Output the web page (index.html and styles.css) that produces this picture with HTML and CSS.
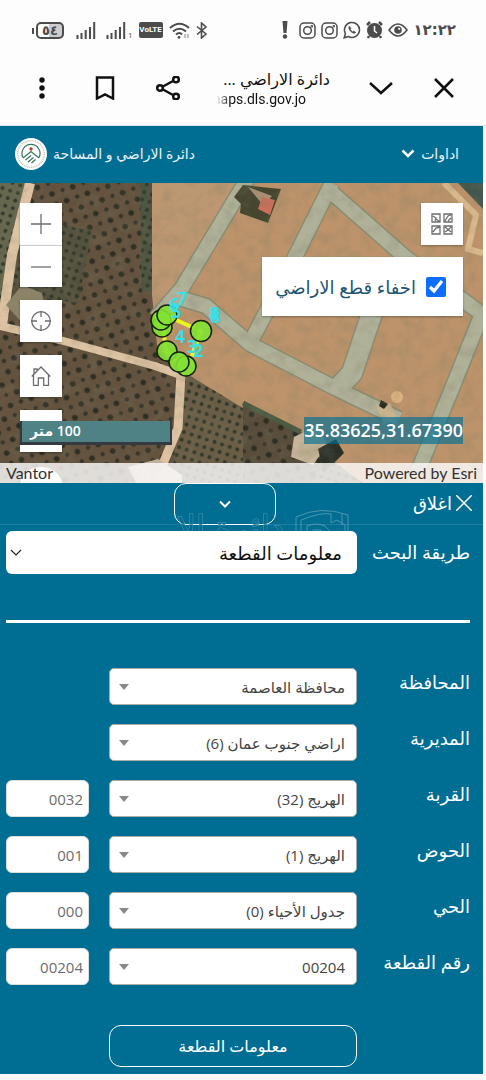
FILE: index.html
```html
<!DOCTYPE html>
<html lang="ar" dir="rtl">
<head>
    <meta charset="UTF-8">
    <meta name="viewport" content="width=device-width, initial-scale=1.0">
    <title>دائرة الاراضي و المساحة</title>
    <link rel="stylesheet" href="styles.css">
</head>
<body>
    <div class="status" dir="ltr">
        <div class="status-group">
            <span class="battery">٥٤</span>
            <svg class="signal" width="20" height="17" viewBox="0 0 20 17"><path d="M1.5 17v-4M5.5 17v-6M9.7 17V8M14 17V5M18.2 17V0"/></svg>
            <span class="sim"><svg class="signal" width="20" height="17" viewBox="0 0 20 17"><path d="M1.5 17v-4M5.5 17v-6M9.7 17V8M14 17V5M18.2 17V0"/></svg><small>1</small></span>
            <span class="volte">VoLTE</span>
            <svg width="21" height="17" viewBox="0 0 21 17" fill="none" stroke="#4c4c4c" stroke-width="2"><path d="M1 6q9.500-8.500 19 0M4 9.500q6.500-5.500 13 0M7 12.500q3.500-3 6 0"/><circle cx="10" cy="15.300" r="1" fill="#4c4c4c" stroke-width="1"/><path d="M16 12v4M19 12v4" stroke="#aaa" stroke-width="1.500"/></svg>
            <svg width="12" height="17" viewBox="0 0 12 17" fill="none" stroke="#4c4c4c" stroke-width="1.600"><path d="M1 4.500l9 7.500-4.500 4V1L10 5l-9 7.500"/></svg>
        </div>
        <div class="status-group status-right">
            <svg class="alert" width="6" height="18" viewBox="0 0 6 18" fill="#4c4c4c"><path d="M.5 0h5l-1 12h-3z"/><circle cx="3" cy="15.500" r="2.200"/></svg>
            <svg width="17" height="17" viewBox="0 0 17 17" fill="none" stroke="#4c4c4c" stroke-width="1.500"><rect x="1" y="1" width="15" height="15" rx="4"/><circle cx="8.500" cy="8.500" r="3.800"/><circle cx="12.800" cy="4.200" r=".5"/></svg>
            <svg width="17" height="17" viewBox="0 0 17 17" fill="none" stroke="#4c4c4c" stroke-width="1.500"><rect x="1" y="1" width="15" height="15" rx="4"/><circle cx="8.500" cy="8.500" r="3.800"/><circle cx="12.800" cy="4.200" r=".5"/></svg>
            <svg width="18" height="18" viewBox="0 0 18 18" fill="none" stroke="#4c4c4c" stroke-width="1.500"><path d="M1.200 16.800l1.200-4.300a7.500 7.500 0 1 1 3 3z"/><path d="M6.400 5.200c-1.500 1.500.2 4.400 2 5.800 1.600 1.300 3.200 1.800 4.300.4l-1.900-1.300-1.200.8-2.300-2.400.6-1.200z" fill="#4c4c4c" stroke-width=".6"/></svg>
            <svg width="17" height="18" viewBox="0 0 17 18"><path d="M1 4l3-3M16 4l-3-3M3 15l-1 2M14 15l1 2" stroke="#4c4c4c" stroke-width="2.500"/><circle cx="8.500" cy="9.500" r="7.500" fill="#4c4c4c"/><path d="M8.500 5v5l2.500 2" fill="none" stroke="#fff" stroke-width="1.500"/></svg>
            <svg width="20" height="14" viewBox="0 0 20 14"><path d="M1 7q9-12 18 0-9 12-18 0z" fill="none" stroke="#4c4c4c" stroke-width="1.600"/><circle cx="10" cy="7" r="3.800" fill="#4c4c4c"/><circle cx="11.200" cy="5.800" r="1.100" fill="#fff"/></svg>
            <time class="clock">١٢:٢٢</time>
        </div>
    </div>

    <div class="browser">
        <button class="icon-btn" aria-label="close"><svg viewBox="0 0 24 24"><path d="M3 3l18 18M21 3L3 21"/></svg></button>
        <button class="icon-btn" aria-label="collapse"><svg viewBox="0 0 24 24"><path d="M1 7l11 10L23 7"/></svg></button>
        <div class="page-title">
            <p class="page-name">دائرة الاراضي ...</p>
            <p class="page-url" dir="ltr"><span>maps.dls.gov.jo</span></p>
        </div>
        <button class="icon-btn" aria-label="share"><svg viewBox="0 0 24 24"><path d="M7 10.500l10-5.500M7 13.500l10 5.500"/><circle cx="4" cy="12" r="2.800"/><circle cx="20" cy="3.500" r="2.800"/><circle cx="20" cy="20.500" r="2.800"/></svg></button>
        <button class="icon-btn" aria-label="bookmark"><svg viewBox="0 0 24 24"><path d="M4 1.500h16v21l-8-4-8 4z"/></svg></button>
        <button class="icon-btn" aria-label="menu"><svg viewBox="0 0 24 24"><g class="solid"><circle cx="12" cy="4" r="2.700"/><circle cx="12" cy="12" r="2.700"/><circle cx="12" cy="20" r="2.700"/></g></svg></button>
    </div>

    <div class="app">
        <header class="navbar">
            <button class="tools">اداوات
                <svg width="14" height="9" viewBox="0 0 14 9"><path d="M1.500 1.500L7 7l5.500-5.500" fill="none" stroke="#fff" stroke-width="2.500"/></svg>
            </button>
            <div class="brand">
                <h1>دائرة الاراضي و المساحة</h1>
                <svg width="32" height="32" viewBox="0 0 32 32" fill="none">
                    <circle cx="16" cy="16" r="16" fill="#fff"/>
                    <circle cx="16" cy="16" r="13.300" stroke="#c5c5be" stroke-width="1.600" stroke-dasharray="1 .8"/>
                    <path d="M8 19.500A9 9 0 1 1 24 19.500" stroke="#3f7560" stroke-width="1.200"/>
                    <path d="M8 20l8-6.500 8 6.500M10.500 22l5.500-4.500M13 24l5.500-4.500M16.500 25l4-3.500" stroke="#3f7560" stroke-width="1.300"/>
                    <circle cx="16" cy="11" r="1.700" fill="#c23a36"/>
                </svg>
            </div>
        </header>

        <section class="map" dir="ltr">
            <svg class="imagery" viewBox="0 0 483 300" preserveAspectRatio="xMidYMid slice">
                <defs>
                    <pattern id="trees" width="16" height="15" patternUnits="userSpaceOnUse" patternTransform="rotate(24)">
                        <circle cx="4" cy="4" r="2.800" fill="#2d2d21"/>
                        <circle cx="12" cy="11" r="2.200" fill="#37342a"/>
                    </pattern>
                    <pattern id="grove" width="8" height="8" patternUnits="userSpaceOnUse" patternTransform="rotate(18)">
                        <circle cx="4" cy="4" r="2" fill="#30372a"/>
                    </pattern>
                    <filter id="grain" x="0" y="0" width="100%" height="100%">
                        <feTurbulence type="fractalNoise" baseFrequency=".08" numOctaves="4" seed="8"/>
                        <feColorMatrix values="0 0 0 0 .2  0 0 0 0 .2  0 0 0 0 .12  1.600 0 0 0 -.65"/>
                    </filter>
                </defs>
                <rect width="483" height="300" fill="#bc936b"/>
                <path d="M152 0h92L168 138l-16-20z" fill="#bd9772"/>
                <!-- orchards -->
                <path d="M0 0h152v112l5 50 22 30-5 108H0z" fill="#63523e"/>
                <path d="M0 0h152v112l5 50 22 30-5 108H0z" fill="url(#trees)"/>
                <path d="M0 0h30L12 100 0 140z" fill="#66664e"/>
                <path d="M0 0h30L12 100 0 140z" fill="url(#grove)"/>
                <path d="M62 42l30 6-14 72-66-10 8-50z" fill="#54523e"/>
                <path d="M62 42l30 6-14 72-66-10 8-50z" fill="url(#grove)"/>
                <path d="M140 0h12v108h-10z" fill="#4d5440"/>
                <path d="M140 0h12v108h-10z" fill="url(#grove)"/>
                <path d="M182 188l61 37 66 36 54 39H172z" fill="#6a5d46"/>
                <path d="M182 188l61 37 66 36 54 39H172z" fill="url(#grove)"/>
                <path d="M243 222l60 28 20 30-10 20h-70z" fill="#584c3b"/>
                <path d="M243 222l60 28 20 30-10 20h-70z" fill="url(#trees)"/>
                <path d="M243 220l58 29" stroke="#4c5a42" stroke-width="5"/>
                <!-- dirt tracks -->
                <g fill="none" stroke="#ddc3a3" stroke-linejoin="round">
                    <path d="M30 0L12 72 2 142" stroke-width="10"/>
                    <path d="M0 143l60 14 95 26 28 10" stroke-width="8"/>
                    <path d="M181 190l-3 55-16 38v17" stroke-width="9"/>
                </g>
                <path d="M6 122l16-20 20 8 4 22-22 10z" fill="#8d8468"/>
                <!-- streets -->
                <g fill="none" stroke="#8b8d72" stroke-width="17" stroke-linejoin="round">
                    <path d="M248-5l-66 110-26 30"/>
                    <path d="M176 114l30 9 44 38 85 44 64 31"/>
                    <path d="M332 0l-36 72-46 88"/>
                    <path d="M330 8l75 66 78 58"/>
                    <path d="M382 100l-30 90-15 16" stroke-width="23"/>
                    <path d="M483 128l-32 80-33 80"/>
                </g>
                <g fill="none" stroke="#b0b199" stroke-width="14" stroke-linejoin="round">
                    <path d="M248-5l-66 110-26 30"/>
                    <path d="M176 114l30 9 44 38 85 44 64 31"/>
                    <path d="M332 0l-36 72-46 88"/>
                    <path d="M330 8l75 66 78 58"/>
                    <path d="M382 100l-30 90-15 16" stroke-width="20"/>
                    <path d="M483 128l-32 80-33 80"/>
                </g>
                <path d="M444 0l32 32-8 34 15 4" fill="none" stroke="#dcb98d" stroke-width="6"/>
                <path d="M458 0h25v26z" fill="#43564d"/>
                <!-- buildings -->
                <path d="M243 2l38 4-13 34-28-10z" fill="#46452f"/>
                <path d="M248 4l24 9-8 10z" fill="#a89173"/>
                <path d="M262 14l13 3-5 15-12-6z" fill="#c9705a"/>
                <path d="M234 14l9-12 3 24z" fill="#46452f"/>
                <path d="M376 222l14-2 6 13-12 9z" fill="#c9b48d"/>
                <path d="M381 217l7 4-4 5-5-3z" fill="#2c2c20"/>
                <circle cx="397" cy="214" r="6" fill="#dcb180"/>
                <path d="M294 254l24-12 9 20-14 20-22-8z" fill="#c6b598"/>
                <path d="M318 266l18-10 8 14-20 20z" fill="#2b3027"/>
                <path d="M128 284l30-8 24 16v8h-46z" fill="#c8b5a4"/>
                <rect width="483" height="300" filter="url(#grain)" opacity=".35"/>
            </svg>

            <div class="tool-stack">
                <div class="zoom">
                    <button class="map-btn" aria-label="zoom in"><svg viewBox="0 0 20 20"><path d="M10 0v20M0 10h20"/></svg></button>
                    <button class="map-btn" aria-label="zoom out"><svg viewBox="0 0 20 20"><path d="M0 10h20"/></svg></button>
                </div>
                <button class="map-btn" aria-label="locate"><svg viewBox="0 0 20 20"><circle cx="10" cy="10" r="9.300"/><path d="M10 0v6M10 14v6M0 10h6M14 10h6"/></svg></button>
                <button class="map-btn" aria-label="home"><svg viewBox="0 0 20 20"><path d="M.7 10.500L10 1l9.300 9.500M3 8.500V3h3v2M2.500 9v10.300h4.800V12h5.400v7.300h4.800V9"/></svg></button>
                <button class="map-btn" aria-label="print"><svg viewBox="0 0 20 20"><path d="M0 1h20M0 2v10h20V2"/></svg></button>
            </div>
            <span class="more-tool"></span>

            <svg class="parcel" width="80" height="100" viewBox="145 100 80 100">
                <path d="M167 134l34 15-12 32M163 145l3 24 13 12" fill="none" stroke="#eaf51d" stroke-width="4" stroke-dasharray="30 4"/>
                <g fill="#82e233" fill-opacity=".9" stroke="#14200a" stroke-width="1.500">
                    <circle cx="162" cy="145" r="10"/>
                    <circle cx="161" cy="138" r="10"/>
                    <circle cx="167" cy="133" r="10"/>
                    <circle cx="201" cy="149" r="10.500"/>
                    <circle cx="167" cy="169" r="10"/>
                    <circle cx="186" cy="184" r="10"/>
                    <circle cx="179" cy="180" r="10"/>
                </g>
                <g class="vertex">
                    <text x="177" y="123">7</text>
                    <text x="169" y="129">6</text>
                    <text x="171" y="136">5</text>
                    <text x="209" y="138">8</text>
                    <text x="210" y="141">8</text>
                    <text x="175" y="161">4</text>
                    <text x="187" y="171">3</text>
                    <text x="193" y="175">2</text>
                </g>
            </svg>

            <button class="map-btn basemap" aria-label="basemap">
                <svg viewBox="0 0 22 22"><path d="M1 1h8v8H1zM13 1h8v8h-8zM1 13h8v8H1zM13 13h8v8h-8zM2 3l3 2-1 3M5 6l4 3M14 8l3-5 3-1M17 8l3-3M2 19l3-4 4-1M14 14l6 5M14 19l3-2 3-3"/></svg>
            </button>

            <div class="hide-layer" dir="rtl">
                <input type="checkbox" id="hideParcels" checked>
                <label for="hideParcels">اخفاء قطع الاراضي</label>
            </div>

            <div class="scale" dir="rtl">100 متر</div>
            <div class="coords">35.83625,31.67390</div>
            <div class="attribution"><span>Vantor</span><span>Powered by Esri</span></div>
        </section>

        <main class="panel">
            <div class="panel-head">
                <button class="close"><svg width="16" height="16" viewBox="0 0 16 16"><path d="M0 0l16 16M16 0L0 16" stroke="#fff" stroke-width="1.500"/></svg>اغلاق</button>
                <button class="toggle" aria-label="collapse panel"><svg width="12" height="9" viewBox="0 0 12 9"><path d="M1 1.500l5 5 5-5" fill="none" stroke="#fff" stroke-width="2"/></svg></button>
                <div class="watermark">
                    <svg width="54" height="26" viewBox="0 0 54 26" fill="none" stroke="#6fa7bc"><path d="M1 26V8Q26-4 53 6v20M6 26V11q20-8 30-6v9M12 26v-9q10-4 18 0l8 9M18 26v-5h8l4 5M36 14l6-3 8 5v10M47 4v12"/></svg>
                    <span>دائرة الا</span>
                </div>
            </div>

            <form class="search">
                <div class="row method">
                    <label for="method">طريقة البحث</label>
                    <div class="select chevron">
                        <select id="method"><option>معلومات القطعة</option></select>
                        <svg width="12" height="8" viewBox="0 0 12 8"><path d="M1 1l5 5 5-5" fill="none" stroke="#222" stroke-width="1.200"/></svg>
                    </div>
                </div>
                <hr>
                <div class="fields">
                    <div class="row">
                        <label for="governorate">المحافظة</label>
                        <div class="select"><select id="governorate"><option>محافظة العاصمة</option></select></div>
                    </div>
                    <div class="row">
                        <label for="directorate">المديرية</label>
                        <div class="select"><select id="directorate"><option>اراضي جنوب عمان (6)</option></select></div>
                    </div>
                    <div class="row">
                        <label for="village">القربة</label>
                        <div class="select"><select id="village"><option>الهريج (32)</option></select></div>
                        <input type="text" value="0032" aria-label="رقم القربة">
                    </div>
                    <div class="row">
                        <label for="basin">الحوض</label>
                        <div class="select"><select id="basin"><option>الهريج (1)</option></select></div>
                        <input type="text" value="001" aria-label="رقم الحوض">
                    </div>
                    <div class="row">
                        <label for="quarter">الحي</label>
                        <div class="select"><select id="quarter"><option>جدول الأحياء (0)</option></select></div>
                        <input type="text" value="000" aria-label="رقم الحي">
                    </div>
                    <div class="row">
                        <label for="parcel">رقم القطعة</label>
                        <div class="select"><select id="parcel"><option>00204</option></select></div>
                        <input type="text" value="00204" aria-label="رقم القطعة">
                    </div>
                </div>
                <div class="row">
                    <button type="button" class="submit">معلومات القطعة</button>
                </div>
            </form>
        </main>
    </div>
</body>
</html>
```
FILE: styles.css
```css
*{
    box-sizing:border-box;
}
body{
    margin:0;
    background:#f6f6f8;
    font-family:'Open Sans', 'DejaVu Sans', sans-serif;
    font-size:16px;
}
button, input, select{
    font-family:inherit;
    font-size:inherit;
    color:inherit;
}
button{
    border:0;
    padding:0;
    background:none;
    cursor:pointer;
}
h1, p{
    margin:0;
}
svg{
    display:block;
    flex:none;
}

/* phone status bar */
.status{
    display:flex;
    justify-content:space-between;
    align-items:center;
    height:60px;
    padding:0 30px 0 32px;
    background:#fdfdfd;
    color:#4c4c4c;
}
.status-group{
    display:flex;
    align-items:center;
    gap:6px;
}
.status-right{
    gap:5px;
}
.battery{
    width:28px;
    height:17px;
    margin:0 6px 0 4px;
    border:2px solid #4c4c4c;
    border-radius:5px;
    background:linear-gradient(90deg, #fff 45%, #ccc 45%);
    font-size:13px;
    font-weight:bold;
    line-height:13px;
    text-align:center;
    position:relative;
}
.battery::before{
    content:"";
    position:absolute;
    left:-6px;
    top:4px;
    width:2px;
    height:6px;
    background:#4c4c4c;
}
.signal{
    stroke:#4c4c4c;
    stroke-width:2;
}
.sim{
    display:flex;
    align-items:flex-end;
    gap:2px;
    margin-left:4px;
}
.sim small{
    font-size:8px;
    line-height:8px;
}
.volte{
    width:24px;
    height:16px;
    border-radius:2px;
    background:#4c4c4c;
    color:#fff;
    font-family:Roboto, sans-serif;
    font-size:8px;
    font-weight:bold;
    line-height:16px;
    text-align:center;
}
.alert{
    margin-right:6px;
}
.clock{
    font-family:'DejaVu Sans', sans-serif;
    font-size:15px;
    font-weight:bold;
    line-height:20px;
}

/* browser bar */
.browser{
    display:flex;
    align-items:center;
    gap:39px;
    height:66px;
    padding:0 30px 10px;
    border-bottom:1px solid #d5e8f2;
    background:#fdfdfd;
    color:#111;
}
.icon-btn{
    width:24px;
    height:24px;
}
.icon-btn svg{
    width:24px;
    height:24px;
    fill:none;
    stroke:#111;
    stroke-width:2.5;
}
.icon-btn .solid{
    fill:#111;
    stroke:none;
}
.page-title{
    flex:1;
    min-width:0;
}
.page-name{
    font-size:16px;
    line-height:22px;
    white-space:nowrap;
}
.page-url{
    display:flex;
    justify-content:flex-end;
    width:90px;
    margin-right:24px;
    overflow:hidden;
    font-family:Roboto, sans-serif;
    font-size:14px;
    line-height:18px;
    mask-image:linear-gradient(90deg, transparent, #000 14px);
}

.app{
    padding-right:3px;
    background:#fdfdfd;
}

/* navbar */
.navbar{
    display:flex;
    justify-content:space-between;
    align-items:center;
    height:57px;
    padding:0 24px 2px 15px;
    background:#006d93;
    color:#e9f3f7;
}
.tools, .brand{
    display:flex;
    align-items:center;
    gap:6px;
}
.tools, .brand h1{
    font-size:14px;
    font-weight:normal;
}

/* map */
.map{
    position:relative;
    height:300px;
    overflow:hidden;
}
.imagery{
    position:absolute;
    width:100%;
    height:100%;
}
.parcel{
    position:absolute;
    left:145px;
    top:99px;
}
.vertex{
    fill:#38dfe6;
    font-family:'Open Sans', sans-serif;
    font-size:18px;
    font-weight:bold;
}
.map-btn{
    display:flex;
    align-items:center;
    justify-content:center;
    width:42px;
    height:42px;
    background:#fff;
    box-shadow:0 1px 2px rgba(0,0,0,.3);
}
.map-btn svg{
    width:20px;
    height:20px;
    fill:none;
    stroke:#6e6e6e;
    stroke-width:1.3;
}
.tool-stack{
    position:absolute;
    left:20px;
    top:20px;
    display:flex;
    flex-direction:column;
    gap:13px;
}
.zoom .map-btn + .map-btn{
    border-top:1px solid #ccc;
}
.more-tool{
    position:absolute;
    left:20px;
    bottom:-20px;
    width:42px;
    height:36px;
    border-radius:50%;
    background:#fff;
}
.basemap{
    position:absolute;
    right:20px;
    top:20px;
}
.basemap svg{
    width:22px;
    height:22px;
}
.hide-layer{
    position:absolute;
    right:20px;
    top:74px;
    display:flex;
    align-items:center;
    gap:10px;
    height:59px;
    padding:0 17px 0 13px;
    background:#fff;
    color:#1e5572;
    font-size:18px;
    box-shadow:0 1px 2px rgba(0,0,0,.3);
}
.hide-layer input{
    width:20px;
    height:20px;
    margin:0;
    accent-color:#0d6efd;
}
.scale{
    position:absolute;
    left:20px;
    bottom:38px;
    width:152px;
    height:24px;
    padding-left:8px;
    border:solid #333b40;
    border-width:0 2px 3px;
    background:#4f8284;
    color:#fff;
    font-size:14px;
    font-weight:600;
    line-height:20px;
    text-align:left;
}
.coords{
    position:absolute;
    right:20px;
    bottom:39px;
    background:rgba(0,109,147,.65);
    color:#fff;
    font-size:18px;
    font-weight:600;
    line-height:27px;
}
.attribution{
    position:absolute;
    left:0;
    right:0;
    bottom:0;
    display:flex;
    justify-content:space-between;
    padding:0 6px;
    background:rgba(255,255,255,.8);
    color:#323232;
    font-family:Lato, sans-serif;
    font-size:16px;
    line-height:20px;
}

/* search panel */
.panel{
    padding-bottom:7px;
    background:#006d93;
    color:#fff;
}
.panel-head{
    position:relative;
    display:flex;
    justify-content:center;
    height:42px;
    padding-right:33px;
    border-bottom:1px solid #1f7d9f;
}
.close{
    position:absolute;
    right:11px;
    top:6px;
    display:flex;
    align-items:center;
    gap:4px;
    font-size:18px;
    line-height:28px;
}
.toggle{
    display:flex;
    align-items:center;
    justify-content:center;
    width:102px;
    height:42px;
    border:1px solid #fff;
    border-radius:12px;
}
.watermark{
    position:absolute;
    top:26px;
    right:134px;
    display:flex;
    gap:10px;
    height:26px;
    color:#006d93;
    font-size:34px;
    line-height:36px;
    white-space:nowrap;
    opacity:.7;
    -webkit-text-stroke:1px #6fa7bc;
    paint-order:stroke;
}
.search{
    position:relative;
    padding:6px 13px 0 6px;
}
.row{
    display:grid;
    grid-template-columns:93px 1fr 83px;
    gap:20px;
}
.row label{
    font-size:18px;
    line-height:28px;
    white-space:nowrap;
}
.select{
    position:relative;
}
.select select{
    display:block;
    width:100%;
    height:37px;
    padding:0 11px;
    border:1px solid #aaa;
    border-radius:5px;
    appearance:none;
    background:#fff;
    color:#444;
    font-size:15px;
}
.select::after{
    content:"";
    position:absolute;
    left:10px;
    top:16px;
    border:5px solid transparent;
    border-top:6px solid #888;
    border-bottom:0;
}
.method .select{
    grid-column:span 2;
}
.method .select select{
    height:43px;
    padding:0 15px;
    border:0;
    border-radius:6px;
    color:#111;
    font-size:18px;
}
.method label{
    line-height:43px;
}
.select.chevron::after{
    display:none;
}
.chevron svg{
    position:absolute;
    left:4px;
    top:18px;
}
.search hr{
    height:3px;
    margin:46px 0 45px;
    border:0;
    background:#fff;
}
.fields{
    display:grid;
    gap:19px;
}
.row input{
    width:100%;
    height:37px;
    padding:0 5px;
    border:1px solid #ddd;
    border-radius:6px;
    background:#fff;
    color:#6c6c6c;
    font-size:15px;
}
.submit{
    grid-column:2;
    height:42px;
    margin-top:40px;
    border:1px solid #fff;
    border-radius:12px;
    font-size:16px;
}
```
